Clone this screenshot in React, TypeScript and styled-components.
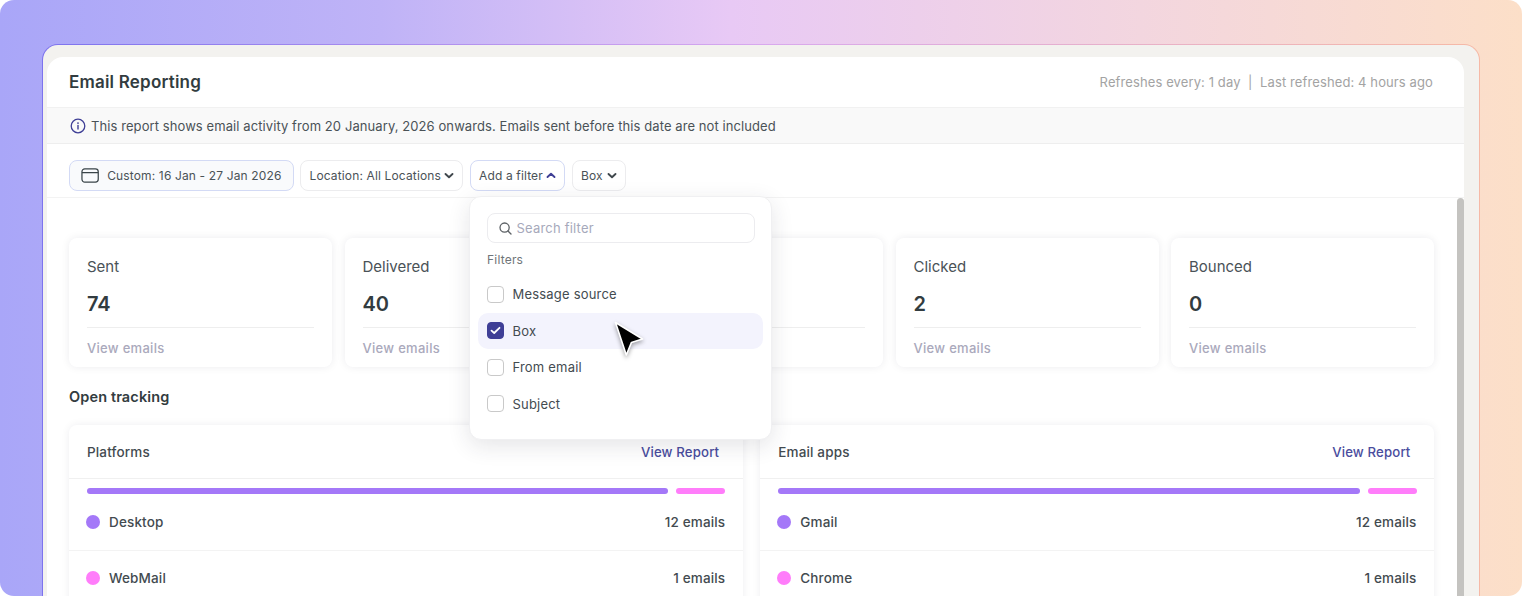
import React from "react";
import styled, { createGlobalStyle } from "styled-components";

const Global = createGlobalStyle`
  html, body { margin: 0; padding: 0; background: #fff; overflow: hidden; }
  * { box-sizing: border-box; }
  body { font-family: Inter, "Liberation Sans", sans-serif; color: #323b40; }
`;

const Backdrop = styled.div`
  width: 1522px;
  height: 596px;
  overflow: hidden;
  padding: 44px 42px 0;
  border-radius: 14px;
  background: linear-gradient(90deg, #a9a6f8 0%, #bfb3f7 25%, #e8c9f5 48%, #f3d6df 75%, #fcdfc8 100%);
`;

const Frame = styled.div`
  height: 560px;
  padding: 12px 15px 0 4px;
  border: 1px solid transparent;
  border-bottom: 0;
  border-radius: 16px 16px 0 0;
  background: linear-gradient(#f3f2ef, #f3f2ef) padding-box,
    linear-gradient(90deg, #7d73ee 0%, #d8a8ee 50%, #f6b9a6 100%) border-box;
`;

const Window = styled.div`
  height: 100%;
  background: #fff;
  border-radius: 16px 16px 0 0;
  display: flex;
  flex-direction: column;
`;

const Header = styled.header`
  height: 51px;
  flex: none;
  padding: 0 31px 0 22px;
  display: flex;
  align-items: center;
  justify-content: space-between;
  border-bottom: 1px solid #f1f1f1;
`;

const Title = styled.h1`
  margin: 0;
  font-size: 17px;
  line-height: 24px;
  font-weight: 600;
  letter-spacing: 0.2px;
  color: #323c40;
`;

const Refresh = styled.div`
  font-size: 13px;
  letter-spacing: 0.11px;
  color: #a3a3a3;
  white-space: pre;
`;

const Banner = styled.div`
  height: 36px;
  flex: none;
  padding: 0 22px 0 23px;
  display: flex;
  align-items: center;
  gap: 5px;
  font-size: 13px;
  letter-spacing: 0.085px;
  color: #4a5257;
  background: #f9f9f9;
  border-bottom: 1px solid #eeeeee;
`;

const FilterBar = styled.div`
  height: 54px;
  flex: none;
  padding: 16px 22px 0;
  display: flex;
  align-items: flex-start;
  gap: 6.5px;
  border-bottom: 1px solid #f3f3f3;
`;

const Chip = styled.div<{ $active?: boolean; $width: number }>`
  width: ${(p) => p.$width}px;
  height: 31px;
  padding: 0 8px 0 8.5px;
  display: flex;
  align-items: center;
  justify-content: space-between;
  font-size: 12px;
  letter-spacing: 0.14px;
  color: #4a5257;
  white-space: nowrap;
  border-radius: 8px;
  border: 1px solid ${(p) => (p.$active ? "#d3daf5" : "#ececee")};
  background: #fff;
`;

const DateChip = styled(Chip)`
  padding: 0 11px;
  background: #f9fafc;
  gap: 8px;
  justify-content: flex-start;
`;

const ChipAnchor = styled.div`
  position: relative;
`;

const Menu = styled.div`
  position: absolute;
  top: 36px;
  left: -0.5px;
  z-index: 5;
  width: 303px;
  height: 243.5px;
  padding: 16px 8px 0;
  background: #fff;
  border: 1px solid #f0f0f2;
  border-radius: 12px;
  box-shadow: 0 6px 22px rgba(40, 40, 60, 0.12);
`;

const SearchBox = styled.div`
  margin: 0 8px 0 8.5px;
  height: 30px;
  padding: 0 10px;
  display: flex;
  align-items: center;
  gap: 4px;
  border: 1px solid #ececef;
  border-radius: 8px;
  font-size: 13px;
  letter-spacing: 0.2px;
  color: #a6a9bb;
`;

const MenuLabel = styled.div`
  margin: 9px 9px 8px;
  font-size: 12px;
  line-height: 16px;
  letter-spacing: 0.2px;
  color: #6f7579;
`;

const MenuItem = styled.div<{ $hover?: boolean }>`
  height: 36.5px;
  padding: 0 8.5px;
  display: flex;
  align-items: center;
  gap: 9px;
  font-size: 13px;
  letter-spacing: 0.2px;
  color: #434b50;
  border-radius: 10px;
  background: ${(p) => (p.$hover ? "#f3f3fd" : "transparent")};
`;

const Check = styled.span<{ $on?: boolean }>`
  width: 17px;
  height: 17px;
  flex: none;
  display: flex;
  align-items: center;
  justify-content: center;
  border-radius: 4px;
  border: 1px solid ${(p) => (p.$on ? "#3f3f96" : "#c9c9c9")};
  background: ${(p) => (p.$on ? "#3f3f96" : "#fff")};
`;

const Cursor = styled.svg`
  position: absolute;
  left: 141px;
  top: 160px;
  z-index: 6;
  filter: drop-shadow(0 2px 2px rgba(0, 0, 0, 0.35));
`;

const Body = styled.div`
  flex: 1;
  min-height: 0;
  display: flex;
  overflow: hidden;
`;

const Content = styled.main`
  flex: 1;
  min-width: 0;
  padding: 40px 23px 0 22px;
`;

const ScrollBar = styled.div`
  width: 7px;
  flex: none;
  background: #c4c3c0;
  border-radius: 4px 4px 0 0;
`;

const Stats = styled.div`
  display: grid;
  grid-template-columns: repeat(5, 1fr);
  gap: 12.5px;
`;

const StatCard = styled.section`
  height: 129px;
  padding: 18px 18px 0;
  border-radius: 8px;
  background: #fff;
  box-shadow: 0 0 8px rgba(30, 30, 50, 0.08);
`;

const StatLabel = styled.div`
  font-size: 15px;
  line-height: 22px;
  color: #4a5257;
`;

const StatValue = styled.div`
  margin-top: 11px;
  padding-bottom: 8px;
  font-size: 20px;
  line-height: 30px;
  font-weight: 600;
  color: #323c40;
  border-bottom: 1px solid #eeeeee;
`;

const StatLink = styled.div`
  margin-top: 11px;
  font-size: 13px;
  line-height: 18px;
  font-weight: 500;
  letter-spacing: 0.3px;
  color: #aaa9bc;
`;

const SectionTitle = styled.h2`
  margin: 20px 0 18px;
  font-size: 14.5px;
  line-height: 20px;
  font-weight: 600;
  letter-spacing: 0.12px;
  color: #323c40;
`;

const Panels = styled.div`
  display: grid;
  grid-template-columns: 1fr 1fr;
  gap: 17.5px;
`;

const Panel = styled.section`
  border-radius: 8px 8px 0 0;
  background: #fff;
  box-shadow: 0 0 8px rgba(30, 30, 50, 0.07);
`;

const PanelHead = styled.div`
  height: 54px;
  padding: 0 23.5px 0 18px;
  display: flex;
  align-items: center;
  justify-content: space-between;
  border-bottom: 1px solid #f0f0f0;
  font-size: 13.5px;
  font-weight: 500;
  letter-spacing: 0.15px;
  color: #434b50;
`;

const PanelLink = styled.span`
  font-size: 13.2px;
  color: #4a4d9e;
`;

const BarTrack = styled.div`
  margin: 9px 17.5px 0;
  display: flex;
  gap: 8px;
`;

const BarPart = styled.div<{ $color: string }>`
  height: 6px;
  border-radius: 3px;
  background: ${(p) => p.$color};
`;

const Row = styled.div`
  height: 56.5px;
  padding: 0 17.5px 0 17px;
  display: flex;
  align-items: center;
  gap: 9px;
  font-size: 13.5px;
  font-weight: 500;
  letter-spacing: 0.15px;
  color: #434b50;
  border-bottom: 1px solid #f3f3f3;
`;

const Dot = styled.span<{ $color: string }>`
  width: 14px;
  height: 14px;
  border-radius: 50%;
  background: ${(p) => p.$color};
`;

const RowValue = styled.span`
  margin-left: auto;
  color: #434b50;
`;

const Chevron = ({ up, color = "#3f474c" }: { up?: boolean; color?: string }) => (
  <svg width="10" height="7" viewBox="0 0 10 7" fill="none" aria-hidden>
    <path
      d={up ? "M1.5 5 5 1.8 8.5 5" : "M1.5 2 5 5.2 8.5 2"}
      stroke={color}
      strokeWidth="1.9"
      strokeLinecap="round"
      strokeLinejoin="round"
    />
  </svg>
);

const PURPLE = "#a478f8";
const PINK = "#ff7dfa";

const stats = [
  ["Sent", "74"],
  ["Delivered", "40"],
  ["Opened", "12"],
  ["Clicked", "2"],
  ["Bounced", "0"],
];

const panels = [
  { title: "Platforms", rows: ["Desktop", "WebMail"] },
  { title: "Email apps", rows: ["Gmail", "Chrome"] },
];

export default function App() {
  return (
    <>
      <Global />
      <Backdrop>
        <Frame>
          <Window>
            <Header>
              <Title>Email Reporting</Title>
              <Refresh>Refreshes every: 1 day{"  |  "}Last refreshed: 4 hours ago</Refresh>
            </Header>
            <Banner>
              <svg width="16" height="16" viewBox="0 0 16 16" fill="none" aria-hidden>
                <circle cx="8" cy="8" r="6.8" stroke="#3f3f96" strokeWidth="1.3" />
                <path d="M8 7.4v3.6" stroke="#3f3f96" strokeWidth="1.4" strokeLinecap="round" />
                <circle cx="8" cy="5.1" r="0.9" fill="#3f3f96" />
              </svg>
              This report shows email activity from 20 January, 2026 onwards. Emails sent before this date are not included
            </Banner>
            <FilterBar>
              <DateChip $active $width={224.5}>
                <svg width="19" height="17" viewBox="0 0 19 17" fill="none" aria-hidden>
                  <rect x="1" y="1.5" width="17" height="14" rx="3" stroke="#3a4448" strokeWidth="1.3" />
                  <path d="M1 5.5h17" stroke="#3a4448" strokeWidth="1.3" />
                </svg>
                Custom: 16 Jan - 27 Jan 2026
              </DateChip>
              <Chip $width={163}>
                Location: All Locations <Chevron />
              </Chip>
              <ChipAnchor>
                <Chip $active $width={95.5}>
                  Add a filter <Chevron up color="#3f3f96" />
                </Chip>
                <Menu>
                  <SearchBox>
                    <svg width="15" height="15" viewBox="0 0 15 15" fill="none" aria-hidden>
                      <circle cx="6.6" cy="6.6" r="4.6" stroke="#5c6165" strokeWidth="1.3" />
                      <path d="M10 10l3 3" stroke="#5c6165" strokeWidth="1.3" strokeLinecap="round" />
                    </svg>
                    Search filter
                  </SearchBox>
                  <MenuLabel>Filters</MenuLabel>
                  <MenuItem>
                    <Check />
                    Message source
                  </MenuItem>
                  <MenuItem $hover>
                    <Check $on>
                      <svg width="11" height="9" viewBox="0 0 11 9" fill="none" aria-hidden>
                        <path d="M1.5 4.6 4.2 7 9.5 1.8" stroke="#fff" strokeWidth="1.8" strokeLinecap="round" strokeLinejoin="round" />
                      </svg>
                    </Check>
                    Box
                  </MenuItem>
                  <MenuItem>
                    <Check />
                    From email
                  </MenuItem>
                  <MenuItem>
                    <Check />
                    Subject
                  </MenuItem>
                </Menu>
                <Cursor width="36" height="40" viewBox="0 0 36 40" aria-hidden>
                  <path d="M4.5 2.5 31.5 19l-11 3.4-5.2 12.6z" fill="#000" stroke="#fff" strokeWidth="1.6" strokeLinejoin="round" />
                </Cursor>
              </ChipAnchor>
              <Chip $width={54}>
                Box <Chevron />
              </Chip>
            </FilterBar>
            <Body>
              <Content>
                <Stats>
                  {stats.map(([label, value]) => (
                    <StatCard key={label}>
                      <StatLabel>{label}</StatLabel>
                      <StatValue>{value}</StatValue>
                      <StatLink>View emails</StatLink>
                    </StatCard>
                  ))}
                </Stats>
                <SectionTitle>Open tracking</SectionTitle>
                <Panels>
                  {panels.map((panel) => (
                    <Panel key={panel.title}>
                      <PanelHead>
                        {panel.title}
                        <PanelLink>View Report</PanelLink>
                      </PanelHead>
                      <BarTrack>
                        <BarPart $color={PURPLE} style={{ flex: 582 }} />
                        <BarPart $color={PINK} style={{ flex: 49 }} />
                      </BarTrack>
                      <Row>
                        <Dot $color={PURPLE} />
                        {panel.rows[0]}
                        <RowValue>12 emails</RowValue>
                      </Row>
                      <Row>
                        <Dot $color={PINK} />
                        {panel.rows[1]}
                        <RowValue>1 emails</RowValue>
                      </Row>
                    </Panel>
                  ))}
                </Panels>
              </Content>
              <ScrollBar />
            </Body>
          </Window>
        </Frame>
      </Backdrop>
    </>
  );
}
